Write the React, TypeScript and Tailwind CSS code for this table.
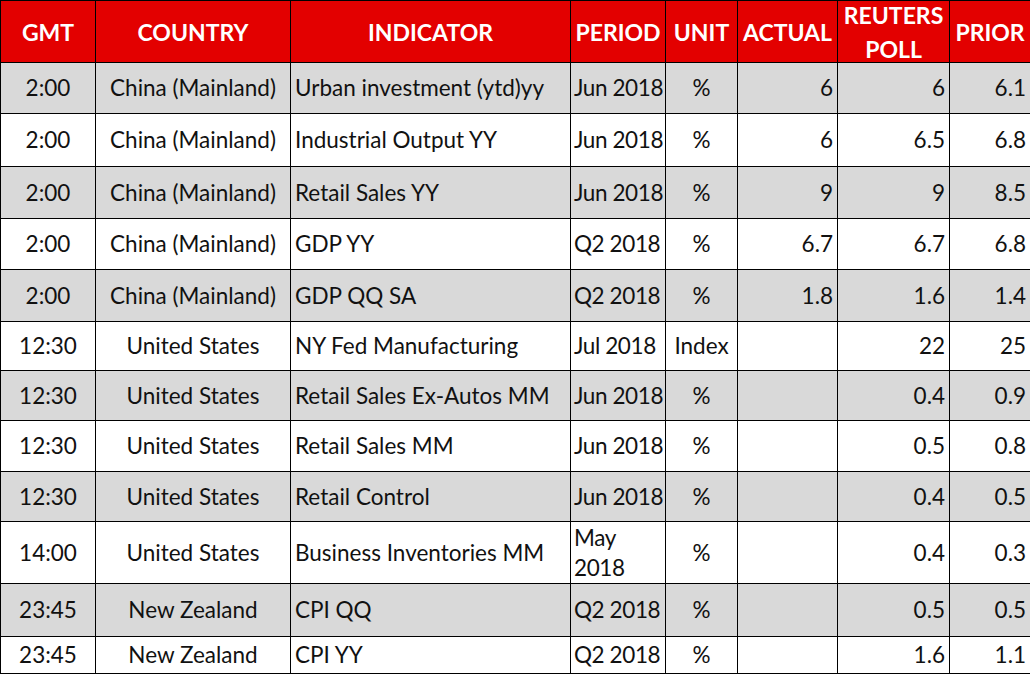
import React from "react"

type Row = {
    gmt: string
    country: string
    indicator: string
    period: string[]
    unit: string
    actual: string
    poll: string
    prior: string
    h: string
}

const rows: Row[] = [
    { gmt: "2:00", country: "China (Mainland)", indicator: "Urban investment (ytd)yy", period: ["Jun 2018"], unit: "%", actual: "6", poll: "6", prior: "6.1", h: "h-[51px]" },
    { gmt: "2:00", country: "China (Mainland)", indicator: "Industrial Output YY", period: ["Jun 2018"], unit: "%", actual: "6", poll: "6.5", prior: "6.8", h: "h-[53px]" },
    { gmt: "2:00", country: "China (Mainland)", indicator: "Retail Sales YY", period: ["Jun 2018"], unit: "%", actual: "9", poll: "9", prior: "8.5", h: "h-[52px]" },
    { gmt: "2:00", country: "China (Mainland)", indicator: "GDP YY", period: ["Q2 2018"], unit: "%", actual: "6.7", poll: "6.7", prior: "6.8", h: "h-[51px]" },
    { gmt: "2:00", country: "China (Mainland)", indicator: "GDP QQ SA", period: ["Q2 2018"], unit: "%", actual: "1.8", poll: "1.6", prior: "1.4", h: "h-[52px]" },
    { gmt: "12:30", country: "United States", indicator: "NY Fed Manufacturing", period: ["Jul 2018"], unit: "Index", actual: "", poll: "22", prior: "25", h: "h-[49px]" },
    { gmt: "12:30", country: "United States", indicator: "Retail Sales Ex-Autos MM", period: ["Jun 2018"], unit: "%", actual: "", poll: "0.4", prior: "0.9", h: "h-[50px]" },
    { gmt: "12:30", country: "United States", indicator: "Retail Sales MM", period: ["Jun 2018"], unit: "%", actual: "", poll: "0.5", prior: "0.8", h: "h-[51px]" },
    { gmt: "12:30", country: "United States", indicator: "Retail Control", period: ["Jun 2018"], unit: "%", actual: "", poll: "0.4", prior: "0.5", h: "h-[50px]" },
    { gmt: "14:00", country: "United States", indicator: "Business Inventories MM", period: ["May", "2018"], unit: "%", actual: "", poll: "0.4", prior: "0.3", h: "h-[62px]" },
    { gmt: "23:45", country: "New Zealand", indicator: "CPI QQ", period: ["Q2 2018"], unit: "%", actual: "", poll: "0.5", prior: "0.5", h: "h-[53px]" },
    { gmt: "23:45", country: "New Zealand", indicator: "CPI YY", period: ["Q2 2018"], unit: "%", actual: "", poll: "1.6", prior: "1.1", h: "h-[37px]" },
]

const headers = ["GMT", "COUNTRY", "INDICATOR", "PERIOD", "UNIT", "ACTUAL", "REUTERS POLL", "PRIOR"]

export default function App() {
    return (
        <div className="w-[1030px] h-[674px] bg-white overflow-hidden" style={{ fontFamily: "Lato, 'Open Sans', sans-serif" }}>
            <table className="table-fixed border-collapse w-[1030px] text-[22.5px] text-[#111]">
                <colgroup>
                    <col className="w-[95px]" />
                    <col className="w-[195px]" />
                    <col className="w-[280px]" />
                    <col className="w-[95px]" />
                    <col className="w-[72px]" />
                    <col className="w-[100px]" />
                    <col className="w-[112px]" />
                    <col className="w-[81px]" />
                </colgroup>
                <thead>
                    <tr className="h-[62px] bg-[#e30000]">
                        {headers.map((h) => (
                            <th key={h} className="border border-black text-white font-bold text-[23px] text-center p-0">
                                <div className="leading-[34px] -my-[4px]">{h}</div>
                            </th>
                        ))}
                    </tr>
                </thead>
                <tbody>
                    {rows.map((r, i) => (
                        <tr key={i} className={`${r.h} ${i % 2 === 0 ? "bg-[#d9d9d9]" : "bg-white"}`}>
                            <td className="border border-black text-center leading-[30px] p-0">{r.gmt}</td>
                            <td className="border border-black text-center leading-[30px] p-0 whitespace-nowrap">{r.country}</td>
                            <td className="border border-black text-left pl-1 py-0 leading-[30px] whitespace-nowrap">{r.indicator}</td>
                            <td className="border border-black text-left pl-[3px] py-0 leading-[30px] whitespace-nowrap tracking-[-0.4px]">
                                {r.period.map((p) => (
                                    <div key={p}>{p}</div>
                                ))}
                            </td>
                            <td className="border border-black text-center leading-[30px] p-0">{r.unit}</td>
                            <td className="border border-black text-right pr-1 py-0 leading-[30px]">{r.actual}</td>
                            <td className="border border-black text-right pr-1 py-0 leading-[30px]">{r.poll}</td>
                            <td className="border border-black text-right pr-1 py-0 leading-[30px]">{r.prior}</td>
                        </tr>
                    ))}
                </tbody>
            </table>
        </div>
    )
}
